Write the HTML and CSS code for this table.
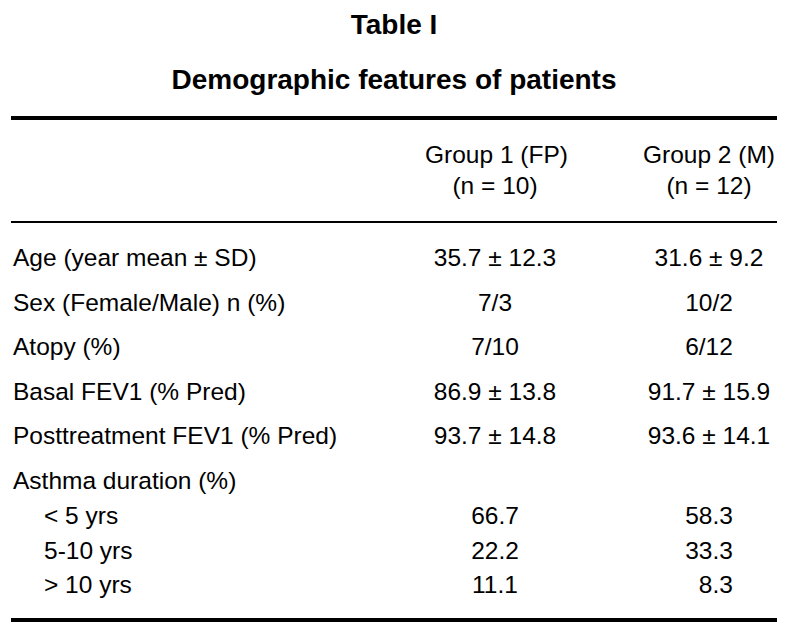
FILE: index.html
```html
<!DOCTYPE html>
<html lang="en">
<head>
<meta charset="utf-8">
<title>Table I</title>
<link rel="stylesheet" href="styles.css">
</head>
<body>
<div class="page">
  <h1 class="title">Table I</h1>
  <h2 class="subtitle">Demographic features of patients</h2>
  <div class="table">
    <div class="row head">
      <div class="label"></div>
      <div class="num">Group 1 (FP)<br>(n = 10)</div>
      <div class="num">Group 2 (M)<br>(n = 12)</div>
    </div>
    <div class="body">
      <div class="row main"><div class="label">Age (year mean ± SD)</div><div class="num">35.7 ± 12.3</div><div class="num">31.6 ± 9.2</div></div>
      <div class="row main"><div class="label">Sex (Female/Male) n (%)</div><div class="num">7/3</div><div class="num">10/2</div></div>
      <div class="row main"><div class="label">Atopy (%)</div><div class="num">7/10</div><div class="num">6/12</div></div>
      <div class="row main"><div class="label">Basal FEV1 (% Pred)</div><div class="num">86.9 ± 13.8</div><div class="num">91.7 ± 15.9</div></div>
      <div class="row main"><div class="label">Posttreatment FEV1 (% Pred)</div><div class="num">93.7 ± 14.8</div><div class="num">93.6 ± 14.1</div></div>
      <div class="row main"><div class="label">Asthma duration (%)</div><div class="num"></div><div class="num"></div></div>
      <div class="row sub first"><div class="label indent">&lt; 5 yrs</div><div class="num">66.7</div><div class="num">58.3</div></div>
      <div class="row sub"><div class="label indent">5-10 yrs</div><div class="num">22.2</div><div class="num">33.3</div></div>
      <div class="row sub"><div class="label indent">&gt; 10 yrs</div><div class="num">11.1</div><div class="num">&#8199;8.3</div></div>
    </div>
  </div>
</div>
</body>
</html>
```

FILE: styles.css
```css
html, body {
  margin: 0;
  padding: 0;
  background: #ffffff;
  color: #000000;
  font-family: "Liberation Sans", Arial, Helvetica, sans-serif;
}

.page {
  width: 766px;
  margin: 0 15px 0 11px;
  padding-top: 9.3px;
}

.title,
.subtitle {
  margin: 0;
  font-size: 28px;
  line-height: 32px;
  font-weight: bold;
  text-align: center;
}

.subtitle {
  margin-top: 22.5px;
}

.table {
  margin-top: 20.2px;
  border-top: 4px solid #000;
  border-bottom: 4px solid #000;
  font-size: 24.5px;
}

.row {
  display: grid;
  grid-template-columns: 1fr 140px 136px;
  column-gap: 76px;
  white-space: nowrap;
}

.head {
  padding: 19.3px 0 19.7px;
  line-height: 31px;
  border-bottom: 2px solid #000;
}

.body {
  padding: 8.3px 0 15.2px;
}

.main,
.sub {
  line-height: 34.5px;
}

.main {
  padding-top: 10px;
}

.sub.first {
  padding-top: 1px;
}

.label {
  padding-left: 2px;
}

.label.indent {
  padding-left: 33px;
}

.num {
  text-align: center;
}
```
